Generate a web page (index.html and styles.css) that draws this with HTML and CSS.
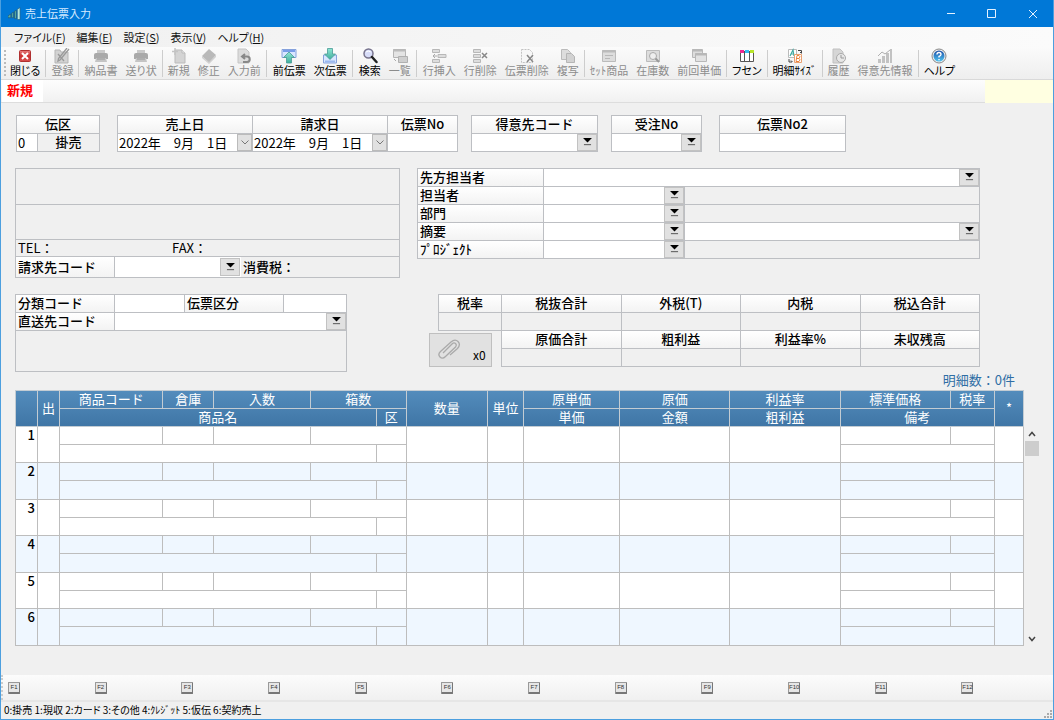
FILE: index.html
```html
<!DOCTYPE html>
<html lang="ja">
<head>
<meta charset="utf-8">
<meta name="viewport" content="width=device-width, initial-scale=1">
<title>売上伝票入力</title>
<link rel="stylesheet" href="styles.css">
</head>
<body>
<svg class="defs" aria-hidden="true">
  <defs>
    <linearGradient id="teal" x1="0" y1="0" x2="0" y2="1"><stop offset="0" stop-color="#8fe6d4"/><stop offset="1" stop-color="#3fae9c"/></linearGradient>
    <linearGradient id="blue" x1="0" y1="0" x2="0" y2="1"><stop offset="0" stop-color="#1d4fa8"/><stop offset="1" stop-color="#4fc4f0"/></linearGradient>
    <linearGradient id="red" x1="0" y1="0" x2="0" y2="1"><stop offset="0" stop-color="#e88080"/><stop offset=".5" stop-color="#cc3030"/><stop offset="1" stop-color="#d85050"/></linearGradient>
    <symbol id="drop" viewBox="0 0 10 9"><path d="M0 0H10L5 5Z" fill="#000"/><path d="M1 7.5H9" stroke="#444" stroke-width="1"/></symbol>
    <symbol id="chev" viewBox="0 0 8 5"><path d="M.5 .5L4 4L7.5 .5" fill="none" stroke="#777" stroke-width="1"/></symbol>
    <symbol id="printer" viewBox="0 0 16 16"><path d="M4 2h8v4H4z" fill="#c9c9c9"/><path d="M1 7q0-2 2-2h10q2 0 2 2v4H1z" fill="#a9a9a9"/><path d="M3 10h10l1 4H2z" fill="#c4c4c4"/><path d="M4 11h8" stroke="#989898"/></symbol>
  </defs>
</svg>

<header class="titlebar">
  <svg class="app-icon" viewBox="0 0 14 14"><path d="M0 9l3-2v4H0zM4 6l2-1v6H4zM7 4l2-1v9H7z" fill="#5fae9d" stroke="#17527c" stroke-width=".7"/><path d="M10 2l3-2v13h-3z" fill="#b9e9dc" stroke="#1c5a80" stroke-width=".7"/></svg>
  <h1>売上伝票入力</h1>
  <div class="window-buttons">
    <button type="button" aria-label="最小化"><svg viewBox="0 0 10 10"><path d="M1 4.5h8"/></svg></button>
    <button type="button" aria-label="最大化"><svg viewBox="0 0 10 10"><path d="M.5 .5h8v8h-8z"/></svg></button>
    <button type="button" aria-label="閉じる"><svg viewBox="0 0 10 10"><path d="M1 1l8 8M9 1l-8 8"/></svg></button>
  </div>
</header>

<nav class="menubar">
  <button type="button">ファイル(<u>F</u>)</button>
  <button type="button">編集(<u>E</u>)</button>
  <button type="button">設定(<u>S</u>)</button>
  <button type="button">表示(<u>V</u>)</button>
  <button type="button">ヘルプ(<u>H</u>)</button>
</nav>

<div class="toolbar" role="toolbar">
  <button type="button"><svg viewBox="0 0 16 16"><rect x="2.500" y="2.500" width="11" height="11" rx="1" fill="url(#red)" stroke="#b03030"/><path d="M5 5l6 6M11 5l-6 6" stroke="#fff" stroke-width="2"/></svg>閉じる</button>
  <i class="sep"></i>
  <button type="button" disabled><svg viewBox="0 0 16 16"><path d="M1 2h5l1 2h7v11H1z" fill="#d2d2d2" stroke="#b5b5b5"/><path d="M4 6l6 7M15 1L6 12l-2 1 .5-2.500L13 0" fill="none" stroke="#999" stroke-width="1.300"/></svg>登録</button>
  <i class="sep"></i>
  <button type="button" disabled><svg><use href="#printer"/></svg>納品書</button>
  <button type="button" disabled><svg><use href="#printer"/></svg>送り状</button>
  <i class="sep"></i>
  <button type="button" disabled><svg viewBox="0 0 16 16"><path d="M4 2h7l3 3v10H4z" fill="#d4d4d4" stroke="#bbb"/><path d="M11 2v3h3" fill="#eee" stroke="#bbb"/><path d="M4 0v7M1 3.500h6" stroke="#c4c4c4" stroke-width="1.500"/></svg>新規</button>
  <button type="button" disabled><svg viewBox="0 0 16 16"><path d="M8 1l7 6-7 8-7-7z" fill="#b9b9b9"/><path d="M1 8l7 6 7-7v2l-7 7-7-6z" fill="#d0d0d0"/></svg>修正</button>
  <button type="button" disabled><svg viewBox="0 0 16 16"><path d="M2 1h8l3 3v11H2z" fill="#dcdcdc" stroke="#c4c4c4"/><path d="M9 6L6 8.500 9 11M6.500 8.500H11a2.500 2.500 0 010 5.500H7" fill="none" stroke="#888" stroke-width="2"/></svg>入力前</button>
  <i class="sep wide"></i>
  <button type="button"><svg viewBox="0 0 16 16"><path d="M1 1.500h14v8H1z" fill="#d8e6ff" stroke="#86a2dc"/><path d="M2 3h12" stroke="#789de8" stroke-width="2"/><path d="M8 4l5.500 5.500h-3V15h-5V9.500h-3z" fill="url(#teal)" stroke="#4a9a96" stroke-width=".8"/></svg>前伝票</button>
  <button type="button"><svg viewBox="0 0 16 16"><path d="M1.500 7h13v8h-13z" fill="#d8e6ff" stroke="#86a2dc"/><path d="M3 13.500h10" stroke="#9ab8ef" stroke-width="2"/><path d="M8 11.500L2.500 6h3V.5h5V6h3z" fill="url(#teal)" stroke="#4a9a96" stroke-width=".8"/></svg>次伝票</button>
  <i class="sep wide"></i>
  <button type="button"><svg viewBox="0 0 16 16"><circle cx="6.500" cy="5.500" r="4.500" fill="#d7dcf8" stroke="#77738c" stroke-width="1.500"/><path d="M4 4q2-2 5 0" stroke="#fff" fill="none"/><path d="M10 9l4.500 5" stroke="#222" stroke-width="2.500" stroke-linecap="round"/></svg>検索</button>
  <button type="button" disabled><svg viewBox="0 0 16 16"><path d="M1.500 1.500h12v8h-12z" fill="#e4e4e4" stroke="#b5b5b5"/><path d="M1 2.500h13" stroke="#bbb" stroke-width="2"/><path d="M6.500 8.500h9v6h-9z" fill="#cfcfcf" stroke="#b0b0b0"/><path d="M2 11l2 2" stroke="#aaa"/></svg>一覧</button>
  <i class="sep wide"></i>
  <button type="button" disabled><svg viewBox="0 0 16 16"><path d="M1.500 1.500h7v3h-7zM1.500 11.500h7v3h-7zM7 6.500h8v3H7z" fill="#ddd" stroke="#b8b8b8"/><path d="M6 8H2m2-2L2 8l2 2" fill="none" stroke="#aaa"/></svg>行挿入</button>
  <button type="button" disabled><svg viewBox="0 0 16 16"><path d="M1.500 1.500h7v3h-7zM1.500 6.500h7v3h-7zM1.500 11.500h7v3h-7z" fill="#ddd" stroke="#b8b8b8"/><path d="M10 5l5 5M15 5l-5 5" stroke="#888" stroke-width="1.500"/></svg>行削除</button>
  <button type="button" disabled><svg viewBox="0 0 16 16"><path d="M2.500 1.500h8l3 3v10h-11z" fill="#f7f7f7" stroke="#c2c2c2" stroke-dasharray="2 1"/><path d="M8 7l6 7M14 7l-6 7" stroke="#888" stroke-width="1.500"/></svg>伝票削除</button>
  <button type="button" disabled><svg viewBox="0 0 16 16"><path d="M1.500 1.500h6l3 3v7h-9z" fill="#ddd" stroke="#bbb"/><path d="M6.500 5.500h5l3 3v6h-8z" fill="#d2d2d2" stroke="#b5b5b5"/></svg>複写</button>
  <i class="sep"></i>
  <button type="button" disabled><svg viewBox="0 0 16 16"><path d="M1.500 2.500h13v11h-13z" fill="#ddd" stroke="#bbb"/><path d="M1 3.500h14" stroke="#bbb" stroke-width="2"/><path d="M4 7.500h8M4 10.500h5" stroke="#b8b8b8"/></svg>ｾｯﾄ商品</button>
  <button type="button" disabled><svg viewBox="0 0 16 16"><path d="M1.500 2.500h13v11h-13z" fill="#ddd" stroke="#bbb"/><circle cx="8" cy="8" r="3.500" fill="#eee" stroke="#aaa"/><path d="M10.500 10.500l3.500 3.500" stroke="#999" stroke-width="2"/></svg>在庫数</button>
  <button type="button" disabled><svg viewBox="0 0 16 16"><path d="M1.500 1.500h10v8h-10z" fill="#ddd" stroke="#b8b8b8"/><path d="M4.500 5.500h11v8h-11z" fill="#e2e2e2" stroke="#b8b8b8"/><path d="M4 6.500h12M1 2.500h10" stroke="#b8b8b8" stroke-width="2"/></svg>前回単価</button>
  <i class="sep"></i>
  <button type="button"><svg viewBox="0 0 16 16"><path d="M1.500 3.500h13v10h-13zM5.500 3v11M10.500 3v11" fill="#fff" stroke="#555"/><path d="M1 3.500h4" stroke="#f02a92" stroke-width="3"/><path d="M6 3.500h4" stroke="#35bdf2" stroke-width="3"/><path d="M11 3.500h4" stroke="#b8e62a" stroke-width="3"/></svg>フセン</button>
  <i class="sep"></i>
  <button type="button"><svg viewBox="0 0 16 16"><path d="M1.500 1.500h8v8h-8z" fill="#fff" stroke="#bbb"/><path d="M3 8l3-6 1 6M4 6h3" fill="none" stroke="#43aaa2" stroke-width="1.200"/><path d="M7.500 6.500h7v8h-7z" fill="#fff" stroke="#e9a070"/><path d="M9 13.500l1-6h2q2 1 0 3 2 1 0 3zM10 10.500h2" fill="none" stroke="#ef843c"/><path d="M11 2.500h3.500V5M13 4l1.500 1.500M2 11v3h3M4 12.500L5.500 14" fill="none" stroke="#444"/></svg>明細ｻｲｽﾞ</button>
  <i class="sep"></i>
  <button type="button" disabled><svg viewBox="0 0 16 16"><path d="M2 1h7l3 3v11H2z" fill="#d6d6d6" stroke="#c0c0c0"/><circle cx="10" cy="10" r="4.500" fill="#e7e7e7" stroke="#aaa"/><path d="M10 7v3h3" fill="none" stroke="#999"/></svg>履歴</button>
  <button type="button" disabled><svg viewBox="0 0 16 16"><path d="M1 11h3v4H1zM5 8h3v7H5zM9 5h3v10H9zM13 1h2v14h-2z" fill="#c2c2c2"/><path d="M1 8l4-4 3 2 5-4" fill="none" stroke="#b0b0b0"/></svg>得意先情報</button>
  <i class="sep"></i>
  <button type="button"><svg viewBox="0 0 16 16"><circle cx="8" cy="8" r="7" fill="#eee" stroke="#888"/><circle cx="8" cy="8" r="5.500" fill="url(#blue)"/><path d="M6 6.500q0-2 2-2t2 2q0 1-2 2v1M8 11v1.300" fill="none" stroke="#fff" stroke-width="1.400"/></svg>ヘルプ</button>
</div>

<div class="modebar">
  <strong class="mode">新規</strong>
  <span class="notice"></span>
</div>

<main>
  <section class="row keys">
    <div class="panel kind">
      <label class="cap both" for="kind">伝区</label>
      <input id="kind" value="0" autofocus>
      <output class="ro">掛売</output>
    </div>
    <div class="key-group">
      <div class="panel dates">
        <label class="cap" for="sale-date">売上日</label>
        <label class="cap" for="bill-date">請求日</label>
        <label class="cap" for="slip-no">伝票No</label>
        <div class="pick"><input id="sale-date" value="2022年　9月　1日"><button type="button" aria-label="売上日を選択"><svg><use href="#chev"/></svg></button></div>
        <div class="pick"><input id="bill-date" value="2022年　9月　1日"><button type="button" aria-label="請求日を選択"><svg><use href="#chev"/></svg></button></div>
        <input id="slip-no">
      </div>
      <div class="panel customer">
        <label class="cap" for="customer">得意先コード</label>
        <div class="pick"><input id="customer"><button type="button" class="drop" aria-label="得意先を検索"><svg><use href="#drop"/></svg></button></div>
      </div>
      <div class="panel order">
        <label class="cap" for="order">受注No</label>
        <div class="pick"><input id="order"><button type="button" class="drop" aria-label="受注を検索"><svg><use href="#drop"/></svg></button></div>
      </div>
    </div>
    <div class="panel slip2">
      <label class="cap" for="slip-no2">伝票No2</label>
      <input id="slip-no2">
    </div>
  </section>

  <section class="row details">
    <div class="panel address">
      <div class="ro"></div>
      <div class="ro"></div>
      <div class="ro contact"><span>TEL：</span><span>FAX：</span></div>
      <div class="ro billing">
        <label class="cap left" for="billing">請求先コード</label>
        <div class="pick"><input id="billing"><button type="button" class="drop" aria-label="請求先を検索"><svg><use href="#drop"/></svg></button></div>
        <span>消費税：</span>
      </div>
    </div>
    <div class="panel staff">
      <label class="cap left" for="contact">先方担当者</label>
      <div class="pick span"><input id="contact"><button type="button" class="drop" aria-label="先方担当者を検索"><svg><use href="#drop"/></svg></button></div>
      <label class="cap left" for="person">担当者</label>
      <div class="pick"><input id="person"><button type="button" class="drop" aria-label="担当者を検索"><svg><use href="#drop"/></svg></button></div>
      <div class="ro"></div>
      <label class="cap left" for="dept">部門</label>
      <div class="pick"><input id="dept"><button type="button" class="drop" aria-label="部門を検索"><svg><use href="#drop"/></svg></button></div>
      <div class="ro"></div>
      <label class="cap left" for="note">摘要</label>
      <div class="pick"><input id="note"><button type="button" class="drop" aria-label="摘要を検索"><svg><use href="#drop"/></svg></button></div>
      <div class="pick"><input aria-label="摘要の内容"><button type="button" class="drop" aria-label="摘要の内容を検索"><svg><use href="#drop"/></svg></button></div>
      <label class="cap left" for="project">ﾌﾟﾛｼﾞｪｸﾄ</label>
      <div class="pick"><input id="project"><button type="button" class="drop" aria-label="プロジェクトを検索"><svg><use href="#drop"/></svg></button></div>
      <div class="ro"></div>
    </div>
  </section>

  <section class="row totals-row">
    <div class="panel delivery">
      <label class="cap left" for="class-code">分類コード</label>
      <input id="class-code">
      <label class="cap left" for="slip-class">伝票区分</label>
      <input id="slip-class">
      <label class="cap left" for="direct">直送先コード</label>
      <div class="pick span3"><input id="direct"><button type="button" class="drop" aria-label="直送先を検索"><svg><use href="#drop"/></svg></button></div>
      <div class="ro span4"></div>
    </div>
    <div class="totals">
      <div class="rate">
        <div class="panel single"><span class="cap">税率</span><span class="ro"></span></div>
        <button type="button" class="attach"><svg viewBox="0 0 24 22"><path d="M6 14L15 5q2-2 3.500-.5t0 3.500L8.500 17.500q-3 3-5.500.5t.5-5.500L14 3q4-3.500 7-.5t-.5 7L13 16" fill="none" stroke="#aaa" stroke-width="1.300"/></svg><span>x0</span></button>
      </div>
      <div class="panel sums">
        <span class="cap">税抜合計</span><span class="cap">外税(T)</span><span class="cap">内税</span><span class="cap">税込合計</span>
        <span class="ro"></span><span class="ro"></span><span class="ro"></span><span class="ro"></span>
        <span class="cap">原価合計</span><span class="cap">粗利益</span><span class="cap">利益率%</span><span class="cap">未収残高</span>
        <span class="ro"></span><span class="ro"></span><span class="ro"></span><span class="ro"></span>
      </div>
    </div>
  </section>

  <p class="count">明細数：0件</p>

  <div class="grid-area">
    <table class="lines">
      <colgroup><col class="w22"><col class="w22"><col class="w103"><col class="w51"><col class="w96"><col class="w66"><col class="w30"><col class="w81"><col class="w36"><col class="w96"><col class="w110"><col class="w110"><col class="w110"><col class="w44"><col class="w29"></colgroup>
      <thead>
        <tr><th rowspan="2"></th><th rowspan="2">出</th><th>商品コード</th><th>倉庫</th><th>入数</th><th colspan="2">箱数</th><th rowspan="2">数量</th><th rowspan="2">単位</th><th>原単価</th><th>原価</th><th>利益率</th><th>標準価格</th><th>税率</th><th rowspan="2">*</th></tr>
        <tr><th colspan="4">商品名</th><th>区</th><th>単価</th><th>金額</th><th>粗利益</th><th colspan="2">備考</th></tr>
      </thead>
      <tbody>
        <tr><th rowspan="2">1</th><td rowspan="2"></td><td></td><td></td><td></td><td colspan="2"></td><td rowspan="2"></td><td rowspan="2"></td><td rowspan="2"></td><td rowspan="2"></td><td rowspan="2"></td><td></td><td></td><td rowspan="2"></td></tr>
        <tr><td colspan="4"></td><td></td><td colspan="2"></td></tr>
      </tbody>
      <tbody>
        <tr><th rowspan="2">2</th><td rowspan="2"></td><td></td><td></td><td></td><td colspan="2"></td><td rowspan="2"></td><td rowspan="2"></td><td rowspan="2"></td><td rowspan="2"></td><td rowspan="2"></td><td></td><td></td><td rowspan="2"></td></tr>
        <tr><td colspan="4"></td><td></td><td colspan="2"></td></tr>
      </tbody>
      <tbody>
        <tr><th rowspan="2">3</th><td rowspan="2"></td><td></td><td></td><td></td><td colspan="2"></td><td rowspan="2"></td><td rowspan="2"></td><td rowspan="2"></td><td rowspan="2"></td><td rowspan="2"></td><td></td><td></td><td rowspan="2"></td></tr>
        <tr><td colspan="4"></td><td></td><td colspan="2"></td></tr>
      </tbody>
      <tbody>
        <tr><th rowspan="2">4</th><td rowspan="2"></td><td></td><td></td><td></td><td colspan="2"></td><td rowspan="2"></td><td rowspan="2"></td><td rowspan="2"></td><td rowspan="2"></td><td rowspan="2"></td><td></td><td></td><td rowspan="2"></td></tr>
        <tr><td colspan="4"></td><td></td><td colspan="2"></td></tr>
      </tbody>
      <tbody>
        <tr><th rowspan="2">5</th><td rowspan="2"></td><td></td><td></td><td></td><td colspan="2"></td><td rowspan="2"></td><td rowspan="2"></td><td rowspan="2"></td><td rowspan="2"></td><td rowspan="2"></td><td></td><td></td><td rowspan="2"></td></tr>
        <tr><td colspan="4"></td><td></td><td colspan="2"></td></tr>
      </tbody>
      <tbody>
        <tr><th rowspan="2">6</th><td rowspan="2"></td><td></td><td></td><td></td><td colspan="2"></td><td rowspan="2"></td><td rowspan="2"></td><td rowspan="2"></td><td rowspan="2"></td><td rowspan="2"></td><td></td><td></td><td rowspan="2"></td></tr>
        <tr><td colspan="4"></td><td></td><td colspan="2"></td></tr>
      </tbody>
    </table>
    <div class="scroll">
      <button type="button" aria-label="上へ"><svg viewBox="0 0 8 6"><path d="M1 5l3-3.500L7 5"/></svg></button>
      <span class="thumb"></span>
      <button type="button" class="down" aria-label="下へ"><svg viewBox="0 0 8 6"><path d="M1 1l3 3.500L7 1"/></svg></button>
    </div>
  </div>
</main>

<div class="fkeys" role="toolbar">
  <button type="button"><kbd>F1</kbd></button>
  <button type="button"><kbd>F2</kbd></button>
  <button type="button"><kbd>F3</kbd></button>
  <button type="button"><kbd>F4</kbd></button>
  <button type="button"><kbd>F5</kbd></button>
  <button type="button"><kbd>F6</kbd></button>
  <button type="button"><kbd>F7</kbd></button>
  <button type="button"><kbd>F8</kbd></button>
  <button type="button"><kbd>F9</kbd></button>
  <button type="button"><kbd>F10</kbd></button>
  <button type="button"><kbd>F11</kbd></button>
  <button type="button"><kbd>F12</kbd></button>
</div>

<footer class="status">
  <span>0:掛売 1:現収 2:カード 3:その他 4:ｸﾚｼﾞｯﾄ 5:仮伝 6:契約売上</span>
  <svg class="size-grip" viewBox="0 0 8 8"><path d="M6 0h2v2H6zM3 3h2v2H3zM6 3h2v2H6zM0 6h2v2H0zM3 6h2v2H3zM6 6h2v2H6z" fill="#aaa"/></svg>
</footer>
</body>
</html>
```
FILE: styles.css
```css
* { box-sizing: border-box; }

body {
  margin: 0;
  min-height: 100vh;
  display: flex;
  flex-direction: column;
  border: 1px solid #4c9fdf;
  border-top: 0;
  background: #f0f0f0;
  color: #000;
  font: 13px/17px "Noto Sans CJK JP", sans-serif;
}

button, input, output { font: inherit; color: inherit; }
button { margin: 0; padding: 0; border: 0; background: none; }
input { display: block; width: 100%; min-width: 0; height: 100%; margin: 0; padding: 0 1px 1px; border: 0; background: #fff; outline: 0; }
.defs { position: absolute; width: 0; height: 0; }

/* Title bar */
.titlebar { display: flex; align-items: center; height: 27px; padding-left: 7px; background: #0078d7; color: #d5eaff; }
.titlebar h1 { margin: 0 auto 0 4px; font-size: 11px; font-weight: 400; }
.app-icon { width: 13px; height: 14px; }
.window-buttons { display: flex; }
.window-buttons button { width: 41px; height: 27px; display: grid; place-items: center; }
.window-buttons svg { width: 10px; height: 10px; fill: none; stroke: #e6f2ff; stroke-width: 1; }

/* Menu */
.menubar { display: flex; gap: 11px; height: 20px; padding-left: 13px; background: linear-gradient(90deg, #f0f0f0, #fbfbfb); }
.menubar button { font-size: 11px; line-height: 20px; font-feature-settings: "palt"; color: #111; }

/* Main toolbar */
.toolbar { display: flex; height: 33px; padding-left: 8px; background: linear-gradient(#fbfbfb, #eee); border-bottom: 1px solid #d9d9d9; }
.toolbar::before { content: ""; width: 0; height: 26px; margin: 3px 0 0 -5px; border-left: 2px dotted #bbb; }
.toolbar button { display: flex; flex-direction: column; align-items: center; padding: 1px 4px 0; font-size: 11px; line-height: 13px; font-feature-settings: "palt"; white-space: nowrap; }
.toolbar svg { width: 16px; height: 16px; }
.toolbar button:disabled { color: #8c8c8c; }
.sep { width: 1px; height: 27px; margin: 3px 1px 0; background: #cdcdcd; }
.sep.wide { margin-right: 2px; }

.modebar { display: flex; height: 23px; padding-left: 1px; background: linear-gradient(#fdfdfd, #f1f1f1); border-bottom: 1px solid #ddd; }
.mode { width: 41px; padding-left: 5px; background: #fff; color: #f00; line-height: 20px; font-weight: 700; }
.notice { width: 68px; height: 23px; margin-left: auto; background: #ffffe1; }

/* Form panels: the gap shows the panel's colour as rules */
main { flex: 1; padding: 12px 14px 0; }
.row { display: flex; align-items: flex-start; margin-bottom: 16px; }
.panel { display: grid; gap: 1px; grid-auto-rows: 17px; border: 1px solid #bdbfc3; background: #bdbfc3; }
.cap { background: linear-gradient(#fff, #f3f3f3); text-align: center; font-weight: 500; line-height: 15px; white-space: nowrap; }
.cap.left { text-align: left; padding-left: 2px; }
.cap.both { grid-column: span 2; }
.ro { display: block; background: #f0f0f0; text-align: center; font-weight: 500; line-height: 15px; }
.pick { display: flex; min-width: 0; background: #fff; }
.pick button { flex: none; width: 15px; display: grid; place-items: center; border: 1px solid #bbb; background: #e1e1e1; }
.pick button svg { width: 8px; height: 5px; }
.pick .drop { width: 20px; padding-bottom: 1px; border: 1px solid #c2c2c2; }
.pick .drop svg { width: 9px; height: 8px; }

.keys { gap: 17px; padding-left: 1px; }
.key-group { display: flex; gap: 13px; }
.kind { width: 84px; grid-template-columns: 20px 1fr; }
.dates { width: 341px; grid-template-columns: 134px 134px 1fr; }
.customer { width: 127px; }
.order { width: 91px; }
.slip2 { width: 127px; }

.details { gap: 17px; }
.address { flex: 0 1 385px; grid-template-rows: 35px 34px 16px 20px; }
.contact { display: grid; grid-template-columns: 154px 1fr; padding-left: 2px; text-align: left; font-weight: 400; line-height: 16px; }
.billing { display: flex; text-align: left; line-height: 19px; }
.billing .cap { width: 98px; line-height: 19px; }
.billing .pick { width: 127px; padding: 1px 1px 1px 0; border-left: 1px solid #bdbfc3; }
.billing span { padding-left: 2px; }
.staff { flex: 1; margin-right: 59px; grid-template-columns: 125px 140px 1fr; }
.span { grid-column: span 2; }
.span3 { grid-column: span 3; }
.span4 { grid-column: span 4; }

.totals-row { margin-bottom: 0; }
.delivery { width: 332px; grid-template-columns: 98px 69px 98px 1fr; grid-template-rows: 17px 17px 40px; }
.totals { display: flex; width: 551px; margin: 0 59px 0 auto; }
.rate { width: 72px; flex: none; }
.single { margin-left: 9px; border-right: 0; }
.sums { flex: 1; grid-template-columns: repeat(4, 1fr); }
.attach { display: flex; align-items: center; width: 63px; height: 34px; margin-top: 2px; padding-left: 7px; border: 1px solid #bfbfbf; background: #e1e1e1; }
.attach svg { width: 24px; height: 22px; }
.attach span { margin: 8px 0 0 12px; font-size: 12px; }

.count { margin: 0 24px 2px; text-align: right; color: #2f6ea5; line-height: 16px; }

/* Slip lines */
.grid-area { display: flex; }
.lines { flex: 1; width: 0; table-layout: fixed; border-collapse: collapse; }
.lines th, .lines td { height: 18px; padding: 0; border: 1px solid #bdbdbd; line-height: 15px; }
.lines thead { background: linear-gradient(#538cbc, #3f75a5); color: #fff; }
.lines thead th { padding-bottom: 2px; border-color: #c3ccd3; font-weight: 400; }
.lines tbody { background: #fff; }
.lines tbody:nth-of-type(even) { background: #eff7ff; }
.lines tbody:nth-of-type(even) tr:last-child td { height: 19px; }
.lines tbody th { padding-right: 2px; text-align: right; vertical-align: top; font-weight: 500; }
.w22 { width: 22px; }
.w29 { width: 29px; }
.w30 { width: 30px; }
.w36 { width: 36px; }
.w44 { width: 44px; }
.w51 { width: 51px; }
.w66 { width: 66px; }
.w81 { width: 81px; }
.w96 { width: 96px; }
.w103 { width: 103px; }
.w110 { width: 110px; }

.scroll { display: flex; flex-direction: column; width: 15px; padding-top: 37px; }
.scroll button { display: grid; place-items: center; height: 14px; }
.scroll svg { width: 8px; height: 6px; fill: none; stroke: #444; stroke-width: 1.5; }
.scroll .thumb { height: 15px; margin-left: 1px; background: #cdcdcd; }
.scroll .down { margin-top: auto; }

/* Function keys and status */
.fkeys { display: grid; grid-template-columns: repeat(12, 1fr); height: 25px; padding: 0 5px; background: linear-gradient(#fcfcfc, #f0f0f0); border-left: 2px dotted #ccc; }
.fkeys button { display: flex; align-items: center; }
.fkeys kbd { width: 12px; height: 12px; border: 1px solid #999; border-right-color: #777; border-bottom: 2px solid #777; border-radius: 1px; background: #e6e6e6; color: #333; font: 6px/9px "Liberation Sans", sans-serif; text-align: center; }
.status { display: flex; justify-content: space-between; align-items: flex-end; height: 19px; padding: 0 1px 1px 3px; border-top: 2px solid #e6e6e6; font-size: 10px; line-height: 16px; font-feature-settings: "palt"; }
.size-grip { width: 8px; height: 8px; }
```
